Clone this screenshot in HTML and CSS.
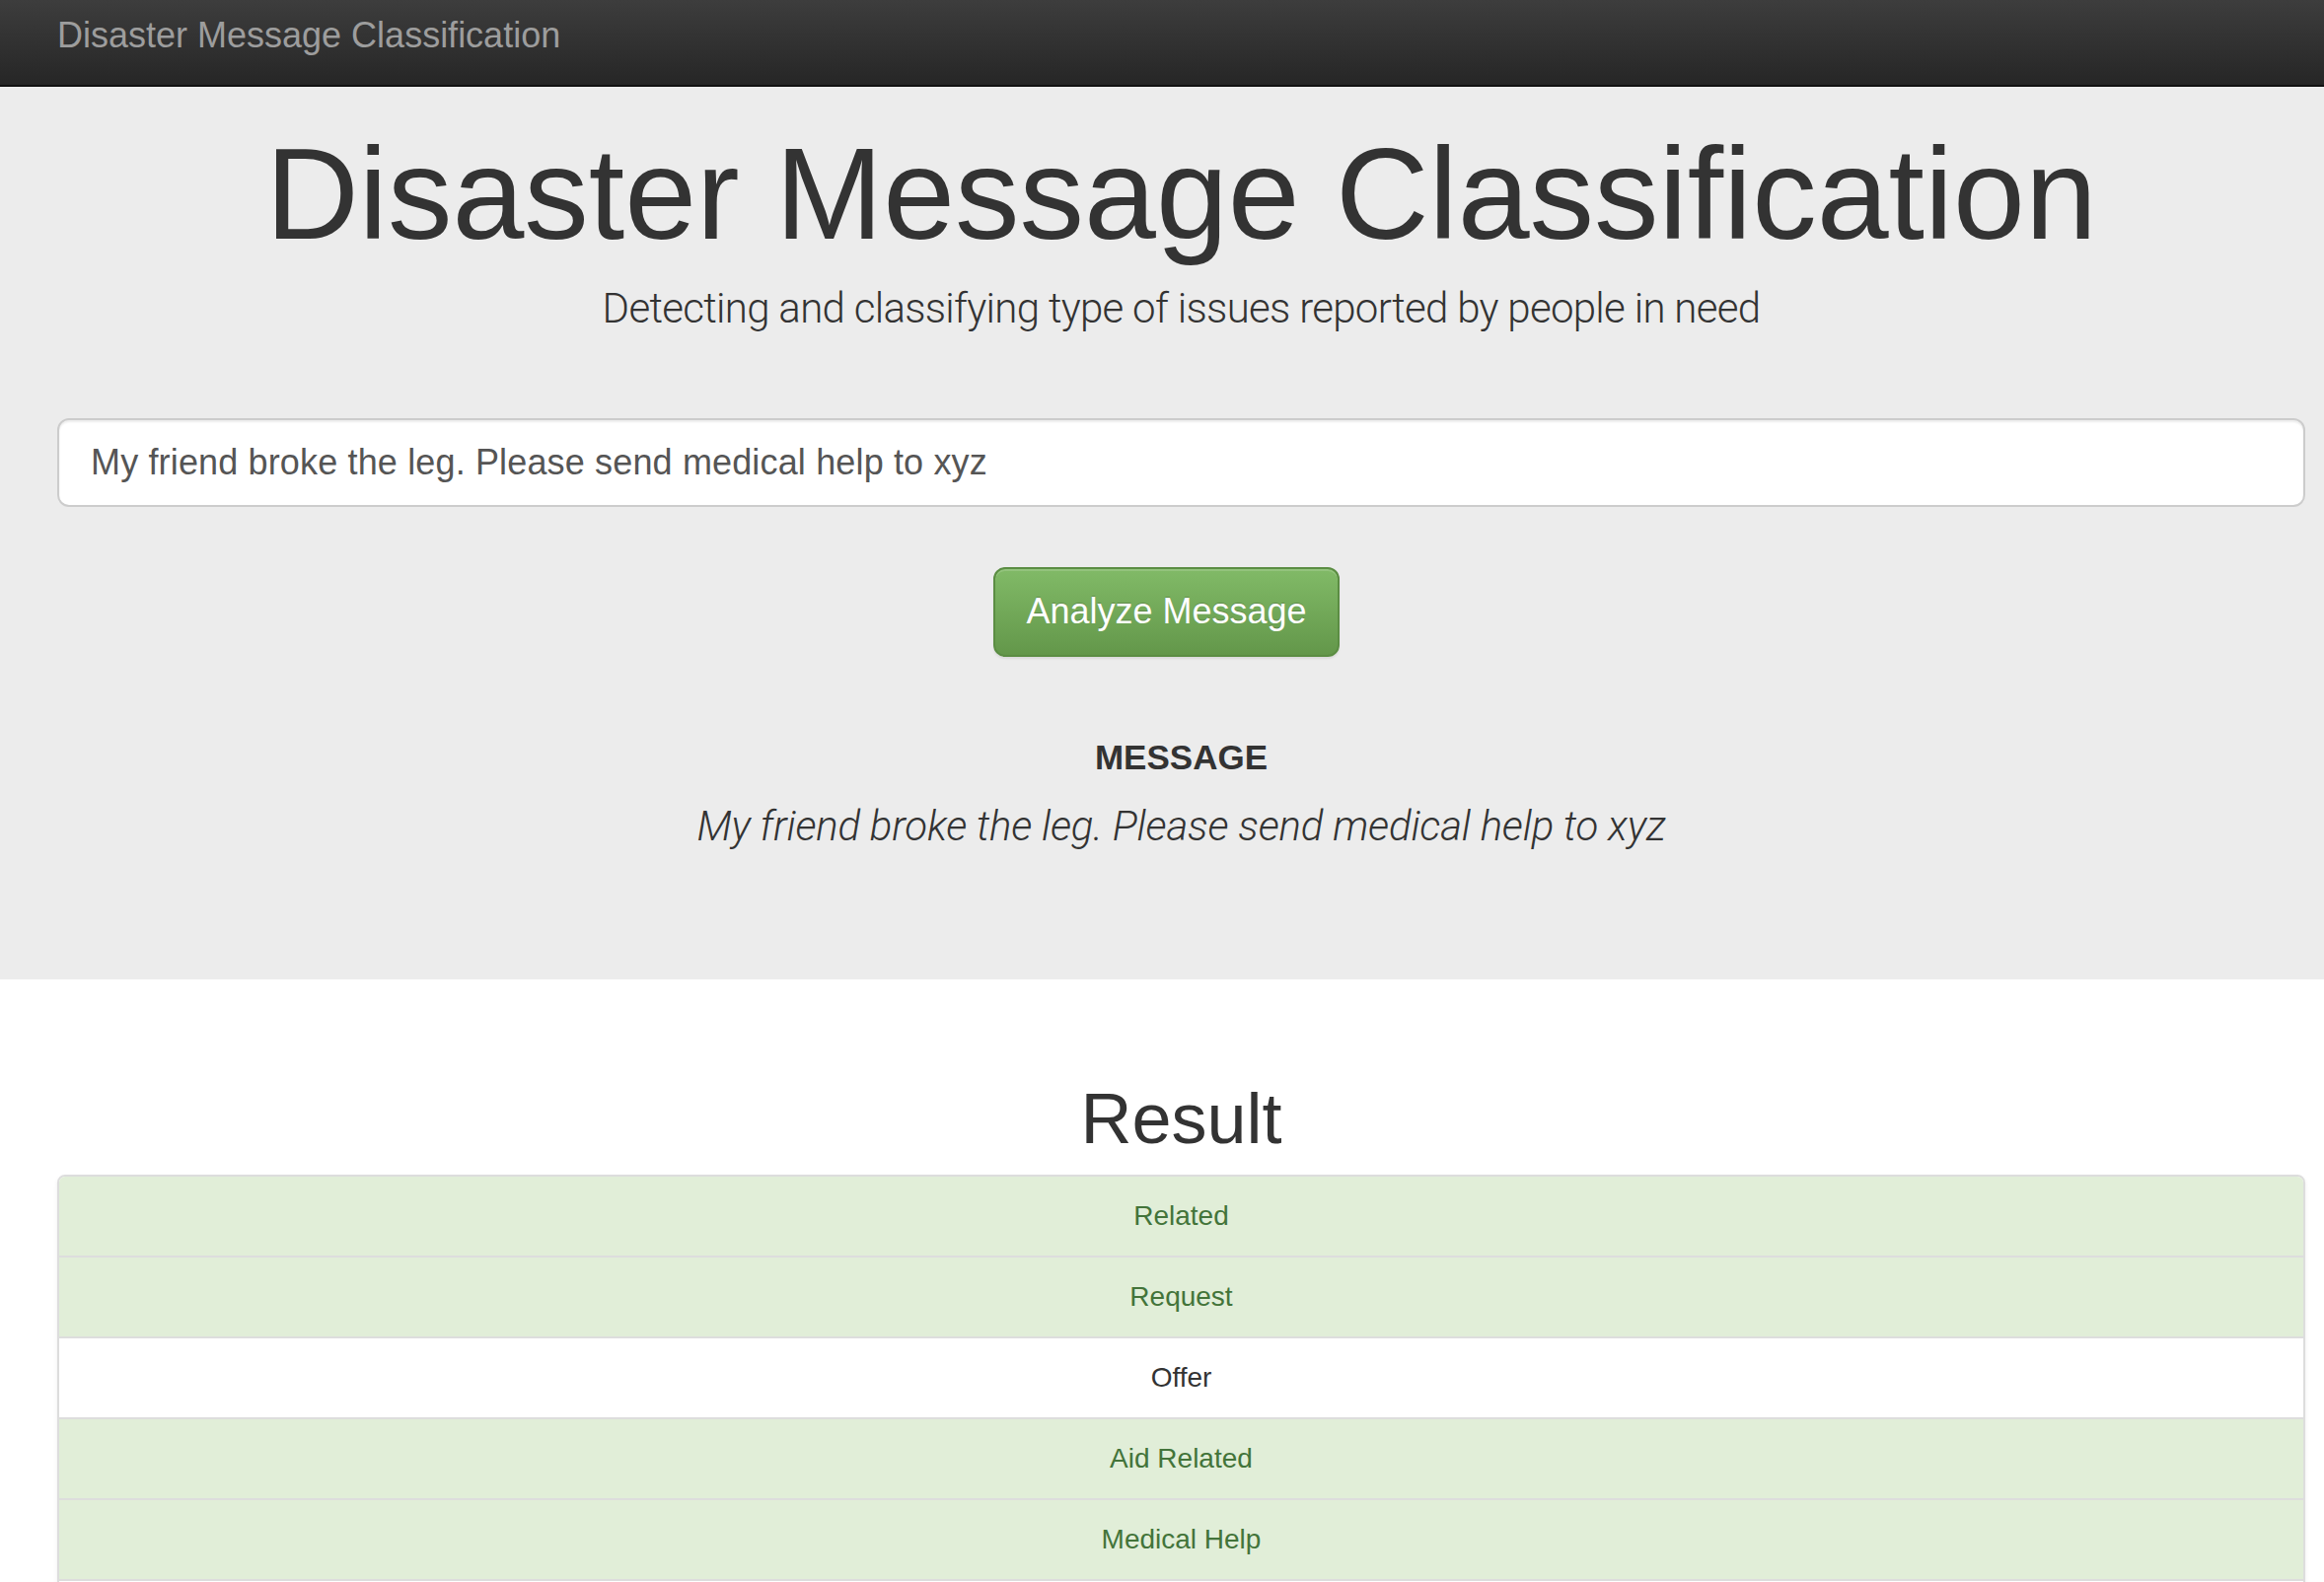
FILE: index.html
```html
<!DOCTYPE html>
<html lang="en">
<head>
<meta charset="utf-8">
<title>Disaster Message Classification</title>
<link rel="stylesheet" href="styles.css">
</head>
<body>
<nav class="navbar">
  <a class="brand" href="#">Disaster Message Classification</a>
</nav>

<section class="jumbotron">
  <h1 class="title">Disaster Message Classification</h1>
  <p class="lead">Detecting and classifying type of issues reported by people in need</p>
  <form class="query-form">
    <input class="query-input" type="text" name="query" value="My friend broke the leg. Please send medical help to xyz">
    <div class="btn-row">
      <button type="button" class="btn-analyze">Analyze Message</button>
    </div>
  </form>
  <h4 class="msg-label">MESSAGE</h4>
  <p class="msg-text">My friend broke the leg. Please send medical help to xyz</p>
</section>

<main class="results">
  <h2 class="result-title">Result</h2>
  <ul class="list-group">
    <li class="item item-success">Related</li>
    <li class="item item-success">Request</li>
    <li class="item">Offer</li>
    <li class="item item-success">Aid Related</li>
    <li class="item item-success">Medical Help</li>
    <li class="item">Medical Products</li>
    <li class="item">Search And Rescue</li>
    <li class="item">Security</li>
  </ul>
</main>
</body>
</html>
```

FILE: styles.css
```css
html, body {
  margin: 0;
  padding: 0;
  background: #ffffff;
}

body {
  font-family: "Liberation Sans", Arial, Helvetica, sans-serif;
  color: #333333;
}

.navbar {
  height: 70px;
  padding-top: 16px;
  padding-left: 58px;
  background: linear-gradient(to bottom, #3d3d3d 0%, #262626 100%);
  border-bottom: 2px solid #111111;
}

.brand {
  display: block;
  font-size: 36px;
  line-height: 40px;
  color: #9d9d9d;
  text-decoration: none;
}

.jumbotron {
  background: #ececec;
  padding: 36.5px 19px 124.4px 58px;
  display: flex;
  flex-direction: column;
}

.title {
  margin: 0;
  font-size: 131px;
  line-height: 143px;
  font-weight: normal;
  text-align: center;
  color: #333333;
}

.lead {
  margin: 15px 0 0;
  font-family: Roboto, "Liberation Sans", sans-serif;
  font-weight: 300;
  font-size: 42px;
  line-height: 60px;
  letter-spacing: -0.7px;
  text-align: center;
  color: #333333;
}

.query-form {
  margin: 81.4px 0 0;
  display: flex;
  flex-direction: column;
}

.query-input {
  box-sizing: border-box;
  width: 100%;
  height: 90px;
  padding: 0 32px;
  font-family: "Liberation Sans", Arial, sans-serif;
  font-size: 36px;
  letter-spacing: 0.15px;
  color: #555555;
  background: #ffffff;
  border: 2px solid #cccccc;
  border-radius: 12px;
  box-shadow: inset 0 2px 2px rgba(0, 0, 0, 0.075);
  outline: none;
}

.btn-row {
  margin-top: 61px;
  display: flex;
  justify-content: center;
  padding-right: 30px;
}

.btn-analyze {
  font-family: "Liberation Sans", Arial, sans-serif;
  font-size: 36px;
  line-height: 48px;
  padding: 19.5px 31px;
  color: #ffffff;
  background: linear-gradient(to bottom, #81ba67 0%, #63974a 100%);
  border: 2px solid #5b8d43;
  border-radius: 12px;
  text-shadow: 0 -1px 0 rgba(0, 0, 0, 0.2);
  box-shadow: inset 0 2px 0 rgba(255, 255, 255, 0.15), 0 2px 2px rgba(0, 0, 0, 0.075);
  cursor: pointer;
}

.msg-label {
  margin: 82.5px 0 0;
  font-size: 35px;
  line-height: 40px;
  font-weight: bold;
  text-align: center;
  color: #333333;
}

.msg-text {
  margin: 20px 0 0;
  font-family: Roboto, "Liberation Sans", sans-serif;
  font-weight: 300;
  font-style: italic;
  font-size: 42px;
  line-height: 60px;
  letter-spacing: -0.2px;
  text-align: center;
  color: #333333;
}

.results {
  padding: 101px 19px 60px 58px;
}

.result-title {
  margin: 0;
  font-size: 72px;
  line-height: 80px;
  font-weight: normal;
  text-align: center;
  color: #333333;
}

.list-group {
  list-style: none;
  margin: 17px 0 0;
  padding: 0;
  border: 2px solid #dddddd;
  border-radius: 8px;
  overflow: hidden;
  box-shadow: 0 2px 4px rgba(0, 0, 0, 0.075);
}

.item {
  padding: 20px 30px;
  font-size: 28px;
  line-height: 40px;
  text-align: center;
  color: #333333;
  background: #ffffff;
  border-top: 2px solid #dddddd;
}

.item:first-child {
  border-top: none;
}

.item-success {
  background: #e1eed8;
  color: #43743a;
}
```
